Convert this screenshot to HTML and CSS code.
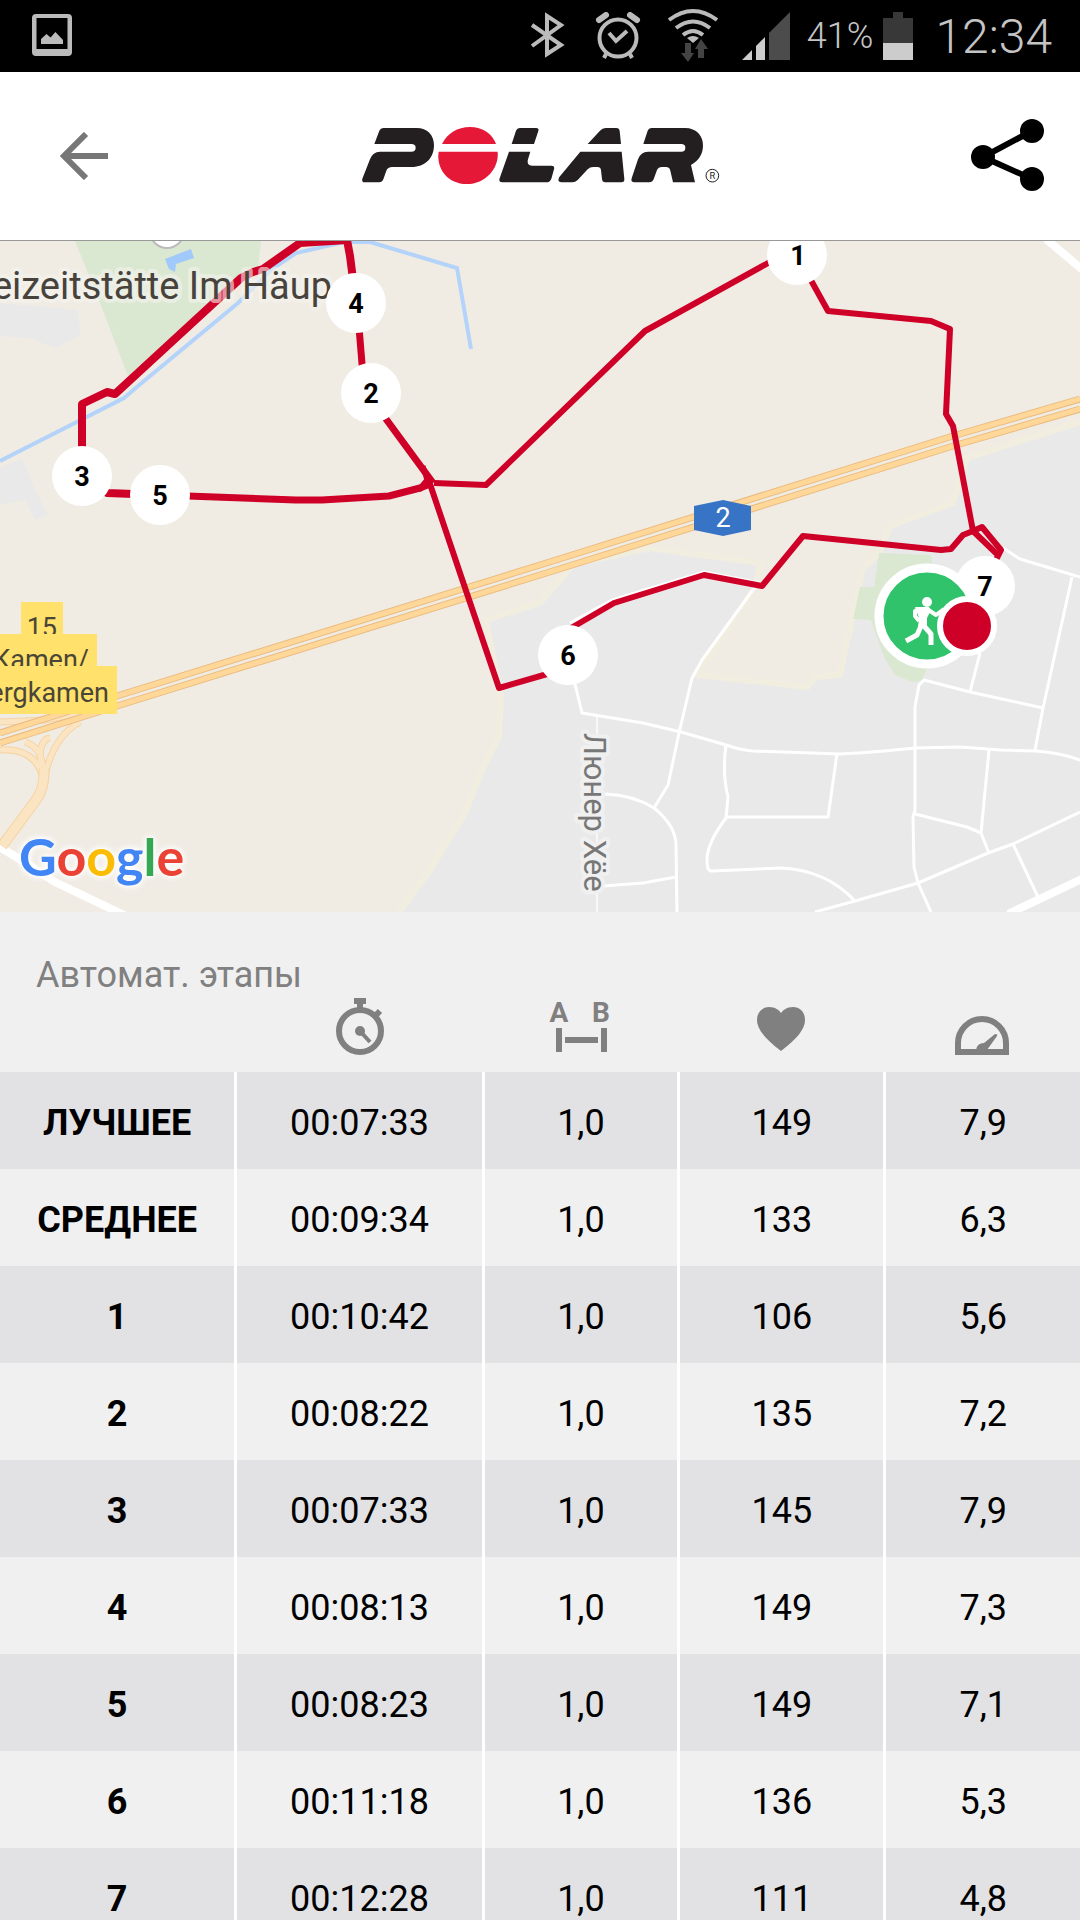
FILE: index.html
```
<!DOCTYPE html>
<html lang="ru">
<head>
    <meta charset="UTF-8">
    <meta name="viewport" content="width=device-width, initial-scale=1.0">
    <title>Polar</title>
    <link rel="stylesheet" href="styles.css">
</head>
<body>

    <div class="status-bar">
        <svg class="status-photo" viewBox="30 12 44 48" width="44" height="48">
            <path fill="#bbb" fill-rule="evenodd" d="M36 14H68Q72 14 72 18V52Q72 56 68 56H36Q32 56 32 52V18Q32 14 36 14ZM36.500 18V49H67.500V18Z"/>
            <path fill="#bbb" d="M41 44V39L46.500 34L50.600 37.600L55.400 32L63 40V44Z"/>
        </svg>
        <div class="status-icons">
            <svg viewBox="522 12 48 48" width="48" height="48">
                <path fill="none" stroke="#bbb" stroke-width="4" d="M532 25L561 45L547 54V16L561 25L532 46"/>
            </svg>
            <svg viewBox="594 12 48 48" width="48" height="48">
                <circle cx="618" cy="38" r="18.500" fill="none" stroke="#bbb" stroke-width="4"/>
                <path fill="none" stroke="#bbb" stroke-width="4" d="M609 33L616 41L627 31M606 54L604 58M630 54L632 58"/>
                <path stroke="#bbb" stroke-width="6" stroke-linecap="round" d="M599 20L606 15M630 15L637 20"/>
            </svg>
            <svg viewBox="666 7 52 56" width="52" height="56">
                <path fill="none" stroke="#bbb" stroke-width="4" d="M669 19Q693 1 717 19M676 27Q693 14 710 27M683 34Q693 26 703 34"/>
                <path fill="#bbb" d="M687 37Q693 33 699 37L693 42Z"/>
                <path fill="#444" d="M685 42H691V52H694L688 61L681 52H685ZM698 57H704V48H708L701 38L695 48H698Z"/>
            </svg>
            <svg viewBox="741 11 48 48" width="48" height="48">
                <path fill="#ccc" d="M741 59L751 49V59ZM755 59V45L764 36V59Z"/>
                <path fill="#4c4c4c" d="M768 59V32L789 11V59Z"/>
            </svg>
        </div>
        <span class="status-charge">41%</span>
        <svg class="status-battery" viewBox="883 10 30 48" width="30" height="48">
            <path fill="#383838" d="M893 10H903V16H913V41H883V16H893Z"/>
            <path fill="#ccc" d="M883 41H913V58H883Z"/>
        </svg>
        <span class="status-time">12:34</span>
    </div>

    <header class="app-bar">
        <button class="icon-button" type="button" aria-label="Назад">
            <svg viewBox="60 132 48 48" width="48" height="48">
                <path fill="none" stroke="#777" stroke-width="6" d="M86 134L64 156L86 178M64 156H108"/>
            </svg>
        </button>
        <svg class="logo" viewBox="60 30 1080 216" width="360" height="72" role="img" aria-label="Polar">
            <g fill="#231f20">
                <path d="M103 102L118 62Q121 54 130 54H230C262 54 282 76 282 105C282 145 255 171 215 171H157Q143 171 139 182L130 208Q127 217 117 217H75Q64 217 67 206L90 148Q98 125 120 125H214Q227 125 227 113Q227 102 214 102Z"/>
                <path d="M515 102L528 62Q531 54 539 54H588Q598 54 595 63L582 102Z"/>
                <path d="M507 125H571L564 148Q559 167 578 167H634Q645 167 642 178L634 206Q630 217 619 217H487Q475 217 479 205Z"/>
                <path d="M743 102L780 62Q787 54 797 54H829Q838 54 839 63L843 102Z"/>
                <path d="M721 125H845L853 207Q854 217 844 217H796Q787 217 786 207L783 181Q782 171 772 171H760Q750 171 743 178L713 210Q706 217 697 217H664Q650 216 658 201Z"/>
                <path d="M910 102L923 62Q926 54 934 54H1035C1070 54 1090 78 1089 108C1088 135 1075 152 1053 165L1065 217H999L991 182Q989 171 978 171H966Q955 171 951 180L941 208Q937 217 928 217H884Q871 217 875 205L894 148Q902 125 924 125H1024Q1036 125 1036 113Q1036 102 1024 102Z"/>
            </g>
            <g fill="#e51937">
                <path d="M306 102C322 70 352 51 390 51C428 51 458 72 468 102Z"/>
                <path d="M296 125H473C478 175 436 222 380 222C325 222 288 178 296 125Z"/>
            </g>
            <circle cx="1117" cy="197" r="19" fill="none" stroke="#231f20" stroke-width="3"/>
            <text class="logo-mark" x="1117" y="207" text-anchor="middle">R</text>
        </svg>
        <button class="icon-button" type="button" aria-label="Поделиться">
            <svg viewBox="971 118 74 76" width="74" height="76">
                <path fill="none" stroke="#000" stroke-width="6" d="M1032 131L983 157L1032 179"/>
                <circle cx="1032" cy="131" r="12"/>
                <circle cx="983" cy="157" r="12"/>
                <circle cx="1032" cy="179" r="12"/>
            </svg>
        </button>
    </header>

    <main>
        <svg class="map" viewBox="0 241 1080 671" role="img" aria-label="Маршрут на карте">
            <rect x="0" y="241" width="1080" height="671" fill="#f0ece4"/>

            <!-- built-up areas and parks -->
            <path fill="#e9e9e9" stroke="#f1eee0" stroke-width="6" d="M399 912L430 870L465 813L482 770L499 737L501 697L486 620L540 603L574 564L650 548L760 563L755 587L697 675L807 687L815 677L840 675L852 620L862 570L879 553L890 526L953 503L967 458L1084 421V916H399Z"/>
            <path fill="#e9e9ea" d="M0 303L78 310L80 335L55 348L30 338L0 336ZM0 468L22 458L35 490L48 515L35 520L25 500L0 505Z"/>
            <path fill="#dae8d1" d="M75 241H261L258 270L128 376L100 303Z"/>
            <path fill="#dae8d1" d="M879 553L931 555L940 640L922 680L912 682L895 675L884 657L871 620L853 619L860 587L874 587Z"/>
            <path fill="#a1c9fb" d="M165 259L191 249L194 258L176 264L175 272L169 269Z"/>
            <circle cx="167" cy="231" r="17" fill="#fff" stroke="#bbb" stroke-width="2"/>
            <path fill="none" stroke="#b3d3fa" stroke-width="4" d="M0 461L124 398L138 386L238 303L272 269L296 253L344 242H370L457 268L471 349"/>

            <!-- streets -->
            <g fill="none" stroke="#fff" stroke-width="3" stroke-linejoin="round">
                <path d="M574 680L582 713L643 723L681 732L726 745Q740 750 753 751L840 754Q862 753 884 751L915 748L960 747L1001 750L1036 751Q1062 753 1080 760"/>
                <path d="M755 587L702 660L692 678L679 733L668 785L654 808"/>
                <path d="M605 794Q633 795 654 808Q676 826 676 845L677 913"/>
                <path d="M604 886L643 883L676 877"/>
                <path d="M726 745Q722 773 728 797L726 818Q707 843 707 860Q707 872 712 871L781 868Q826 870 855 901"/>
                <path d="M726 817H828L837 754"/>
                <path d="M931 912L918 883L914 867L913 817L915 810V707L919 685L924 680L970 692L1043 708"/>
                <path d="M980 653L970 692M1072 577L1043 708L1035 750"/>
                <path d="M1003 548L1020 559L1080 577"/>
                <path d="M989 750L981 833L989 853M915 814L967 827L981 833"/>
                <path d="M815 912L855 901L918 883L988 853L1013 844L1080 812M1013 844L1038 897"/>
                <path d="M570 623L612 600L704 572L760 583"/>
            </g>
            <path stroke="#f8f8f8" stroke-width="2" d="M597 717V912"/>
            <path fill="none" stroke="#fff" stroke-width="8" d="M1008 914L1084 878M1046 239L1084 271M-2 846L21 860L55 882L126 916"/>

            <!-- motorway and its exit -->
            <g fill="none" stroke-linejoin="round">
                <path stroke="#f6d3a2" stroke-width="7" d="M0 722L45 720L80 713M0 750Q34 748 42 775M25 742Q44 748 43 775M50 738Q36 740 42 775M80 722Q54 736 45 775"/>
                <path stroke="#fbe4c2" stroke-width="5" d="M0 722L45 720L80 713M0 750Q34 748 42 775M25 742Q44 748 43 775M50 738Q36 740 42 775M80 722Q54 736 45 775"/>
                <path stroke="#f6d3a2" stroke-width="11" d="M44 768Q45 788 36 800L2 846"/>
                <path stroke="#fbe4c2" stroke-width="9" d="M44 766Q45 788 36 800L2 846"/>
                <path stroke="#e9bb80" stroke-width="7" d="M0 733L117 696L540 565L953 436L1080 399M0 743L117 706L540 575L953 446L1080 409"/>
                <path stroke="#ffd798" stroke-width="5" d="M0 733L117 696L540 565L953 436L1080 399M0 743L117 706L540 575L953 446L1080 409"/>
            </g>
            <path fill="#3874c6" d="M694 506L723 500L751 506V530L723 536L694 530Z"/>
            <text class="map-shield" x="723" y="527">2</text>

            <text class="map-street" transform="translate(584 733) rotate(90)">Люнер Хёе</text>

            <!-- route -->
            <g fill="none" stroke="#cf0028" stroke-width="6" stroke-linejoin="round">
                <path d="M996 560L1001 550L982 527L973 531L953 426L946 414L950 329L931 321L828 311L797 255M797 247L645 331L486 485L434 483"/>
                <path d="M430 484L461 576L499 688L568 668M566 631L614 603L704 575L762 586L803 536L941 550L951 549L963 535L973 531L999 556"/>
                <path stroke-width="7" d="M433 483L386 419L364 388L357 303"/>
                <path stroke-width="7" d="M430 484L420 488L389 496L322 500H296L160 495"/>
                <path stroke-width="5" d="M423 466L428 484L419 490M420 488L430 476"/>
                <path stroke-width="8" d="M356 303L350 256L347 240L300 243L263 269L253 272L241 278L115 394L107 392L82 404V476L107 493L160 495"/>
            </g>

            <text class="map-place" x="332" y="299">Freizeitstätte Im Häup</text>

            <g class="map-exit">
                <rect x="21" y="602" width="42" height="48"/>
                <text x="57" y="637">15</text>
                <rect x="-30" y="634" width="127" height="48"/>
                <text x="89" y="669">Kamen/</text>
                <rect x="-40" y="666" width="157" height="48"/>
                <text x="109" y="702">Bergkamen</text>
            </g>

            <text class="map-google" x="19" y="876"><tspan fill="#4285f4">G</tspan><tspan fill="#ea4335">o</tspan><tspan fill="#fbbc05">o</tspan><tspan fill="#4285f4">g</tspan><tspan fill="#34a853">l</tspan><tspan fill="#ea4335">e</tspan></text>

            <!-- lap markers -->
            <g class="map-lap">
                <circle cx="797" cy="255" r="30"/>
                <text x="798" y="265">1</text>
                <circle cx="371" cy="393" r="30"/>
                <text x="371" y="403">2</text>
                <circle cx="82" cy="476" r="30"/>
                <text x="82" y="486">3</text>
                <circle cx="356" cy="303" r="30"/>
                <text x="356" y="313">4</text>
                <circle cx="160" cy="495" r="30"/>
                <text x="160" y="505">5</text>
                <circle cx="568" cy="655" r="30"/>
                <text x="568" y="665">6</text>
                <circle cx="985" cy="586" r="30"/>
                <text x="985" y="596">7</text>
            </g>

            <!-- start and finish -->
            <circle cx="927" cy="616" r="48" fill="#30c36b" stroke="#fff" stroke-width="9"/>
            <g fill="none" stroke="#fff" stroke-linejoin="round">
                <circle cx="927" cy="602" r="5" fill="#fff" stroke="none"/>
                <path fill="#fff" stroke="none" d="M915 607H929L931 610L927 618V627H918L919 618Z"/>
                <path stroke-width="4" d="M919 609L915 611V616L919 621M927 609L936 615L944 609"/>
                <path stroke-width="5" d="M921 626L917 635L906 641M924 626L931 634V645"/>
            </g>
            <circle cx="967" cy="626" r="27" fill="#cf0028" stroke="#fff" stroke-width="6"/>
        </svg>

        <section class="laps">
            <h2>Автомат. этапы</h2>
            <table>
                <thead>
                    <tr>
                        <td class="col-lap"></td>
                        <th class="col-time" scope="col">
                            <svg viewBox="329 996 60 60" width="60" height="60" role="img" aria-label="Время">
                                <g fill="none" stroke="#808080" stroke-width="6">
                                    <circle cx="361" cy="1031" r="21"/>
                                    <path d="M355 1001H367M361 1003V1011M374 1018L381 1011"/>
                                    <path stroke-width="4" d="M361 1031L371 1042"/>
                                </g>
                                <circle cx="361" cy="1031" r="5" fill="#808080"/>
                            </svg>
                        </th>
                        <th class="col-distance" scope="col">
                            <svg viewBox="549 996 62 60" width="62" height="60" role="img" aria-label="Расстояние">
                                <text class="ab-letter" x="560" y="1022">A</text>
                                <text class="ab-letter" x="602" y="1022">B</text>
                                <path fill="#808080" d="M557 1028H563V1052H557ZM602 1028H608V1052H602ZM566 1037H599V1043H566Z"/>
                            </svg>
                        </th>
                        <th class="col-pulse" scope="col">
                            <svg viewBox="750 996 60 60" width="60" height="60" role="img" aria-label="Пульс">
                                <path fill="#808080" d="M781 1051C765 1039 757 1029 757 1020C757 1012 763 1007 769 1007C775 1007 779 1010 781 1013C783 1010 787 1007 793 1007C800 1007 805 1012 805 1020C805 1029 797 1039 781 1051Z"/>
                            </svg>
                        </th>
                        <th class="col-speed" scope="col">
                            <svg viewBox="952 996 60 60" width="60" height="60" role="img" aria-label="Скорость">
                                <path fill="none" stroke="#808080" stroke-width="6" d="M958 1052V1043A24 24 0 0 1 1006 1043V1052Z"/>
                                <path fill="#808080" d="M976 1050Q977 1043 984 1043L995 1034Q998 1034 997 1036L987 1050Z"/>
                            </svg>
                        </th>
                    </tr>
                </thead>
                <tbody>
                    <tr><th scope="row">ЛУЧШЕЕ</th><td>00:07:33</td><td>1,0</td><td>149</td><td>7,9</td></tr>
                    <tr><th scope="row">СРЕДНЕЕ</th><td>00:09:34</td><td>1,0</td><td>133</td><td>6,3</td></tr>
                    <tr><th scope="row">1</th><td>00:10:42</td><td>1,0</td><td>106</td><td>5,6</td></tr>
                    <tr><th scope="row">2</th><td>00:08:22</td><td>1,0</td><td>135</td><td>7,2</td></tr>
                    <tr><th scope="row">3</th><td>00:07:33</td><td>1,0</td><td>145</td><td>7,9</td></tr>
                    <tr><th scope="row">4</th><td>00:08:13</td><td>1,0</td><td>149</td><td>7,3</td></tr>
                    <tr><th scope="row">5</th><td>00:08:23</td><td>1,0</td><td>149</td><td>7,1</td></tr>
                    <tr><th scope="row">6</th><td>00:11:18</td><td>1,0</td><td>136</td><td>5,3</td></tr>
                    <tr><th scope="row">7</th><td>00:12:28</td><td>1,0</td><td>111</td><td>4,8</td></tr>
                </tbody>
            </table>
        </section>
    </main>

</body>
</html>
```

FILE: styles.css
```
* {
    margin: 0;
    padding: 0;
    box-sizing: border-box;
}
body {
    display: flex;
    flex-direction: column;
    height: 100vh;
    overflow: hidden;
    font-family: Roboto, "Noto Sans", sans-serif;
    background-color: #f0f0f0;
    color: #000;
}
svg {
    display: block;
}

/* status bar */
.status-bar {
    display: flex;
    flex: none;
    align-items: center;
    height: 72px;
    padding: 0 28px 0 30px;
    background-color: #000;
    color: #c4c4c4;
}
.status-icons {
    display: flex;
    align-items: center;
    gap: 24px;
    margin-left: auto;
}
.status-charge {
    margin-left: 17px;
    font-size: 36px;
    font-weight: 300;
}
.status-battery {
    margin: 0 22px 0 10px;
}
.status-time {
    font-size: 48px;
    font-weight: 300;
}

/* app bar */
.app-bar {
    display: flex;
    flex: none;
    align-items: center;
    justify-content: space-between;
    height: 169px;
    padding: 0 35px 0 60px;
    background-color: #fff;
    border-bottom: 1px solid #999;
}
.icon-button {
    border: none;
    background: none;
    cursor: pointer;
}
.logo-mark {
    font-size: 28px;
    fill: #231f20;
}

/* map */
main {
    flex: 1;
    min-height: 0;
    overflow: hidden;
}
.map {
    width: 100%;
    height: auto;
}
.map-shield {
    font-size: 27px;
    text-anchor: middle;
    fill: #fff;
}
.map-place {
    font-size: 38px;
    text-anchor: end;
    fill: #47433c;
    stroke: rgba(245, 243, 238, 0.6);
    stroke-width: 8px;
    stroke-linejoin: round;
    paint-order: stroke;
}
.map-street {
    font-size: 31px;
    fill: #777;
    stroke: #f0f0f0;
    stroke-width: 8px;
    stroke-linejoin: round;
    paint-order: stroke;
}
.map-exit rect {
    fill: #ffe16b;
}
.map-exit text {
    font-size: 27px;
    text-anchor: end;
    fill: #4a4637;
}
.map-google {
    font-family: Lato, sans-serif;
    font-size: 52px;
    font-weight: 700;
    filter: drop-shadow(0 0 3px #fff) drop-shadow(0 0 2px #fff);
}
.map-lap circle {
    fill: #fff;
}
.map-lap text {
    font-size: 27px;
    font-weight: 700;
    text-anchor: middle;
}

/* laps table */
.laps {
    padding-top: 42px;
}
.laps h2 {
    padding-left: 36px;
    font-size: 36px;
    font-weight: 400;
    line-height: 42px;
    color: #808080;
}
table {
    width: 100%;
    table-layout: fixed;
    border-collapse: separate;
    border-spacing: 0;
}
.col-lap {
    width: 21.7%;
}
.col-time {
    width: 22.9%;
}
.col-distance {
    width: 18.1%;
}
.col-pulse {
    width: 19.1%;
}
thead th {
    padding-bottom: 16px;
}
thead svg {
    margin: 0 auto;
}
.ab-letter {
    font-size: 28px;
    font-weight: 700;
    text-anchor: middle;
    fill: #808080;
}
tbody th,
tbody td {
    padding: 30px 0 25px;
    font-size: 36px;
    line-height: 42px;
    text-align: center;
}
tbody td {
    border-left: 3px solid #fff;
}
tbody tr:nth-child(odd) {
    background-color: #e2e2e4;
}
```
